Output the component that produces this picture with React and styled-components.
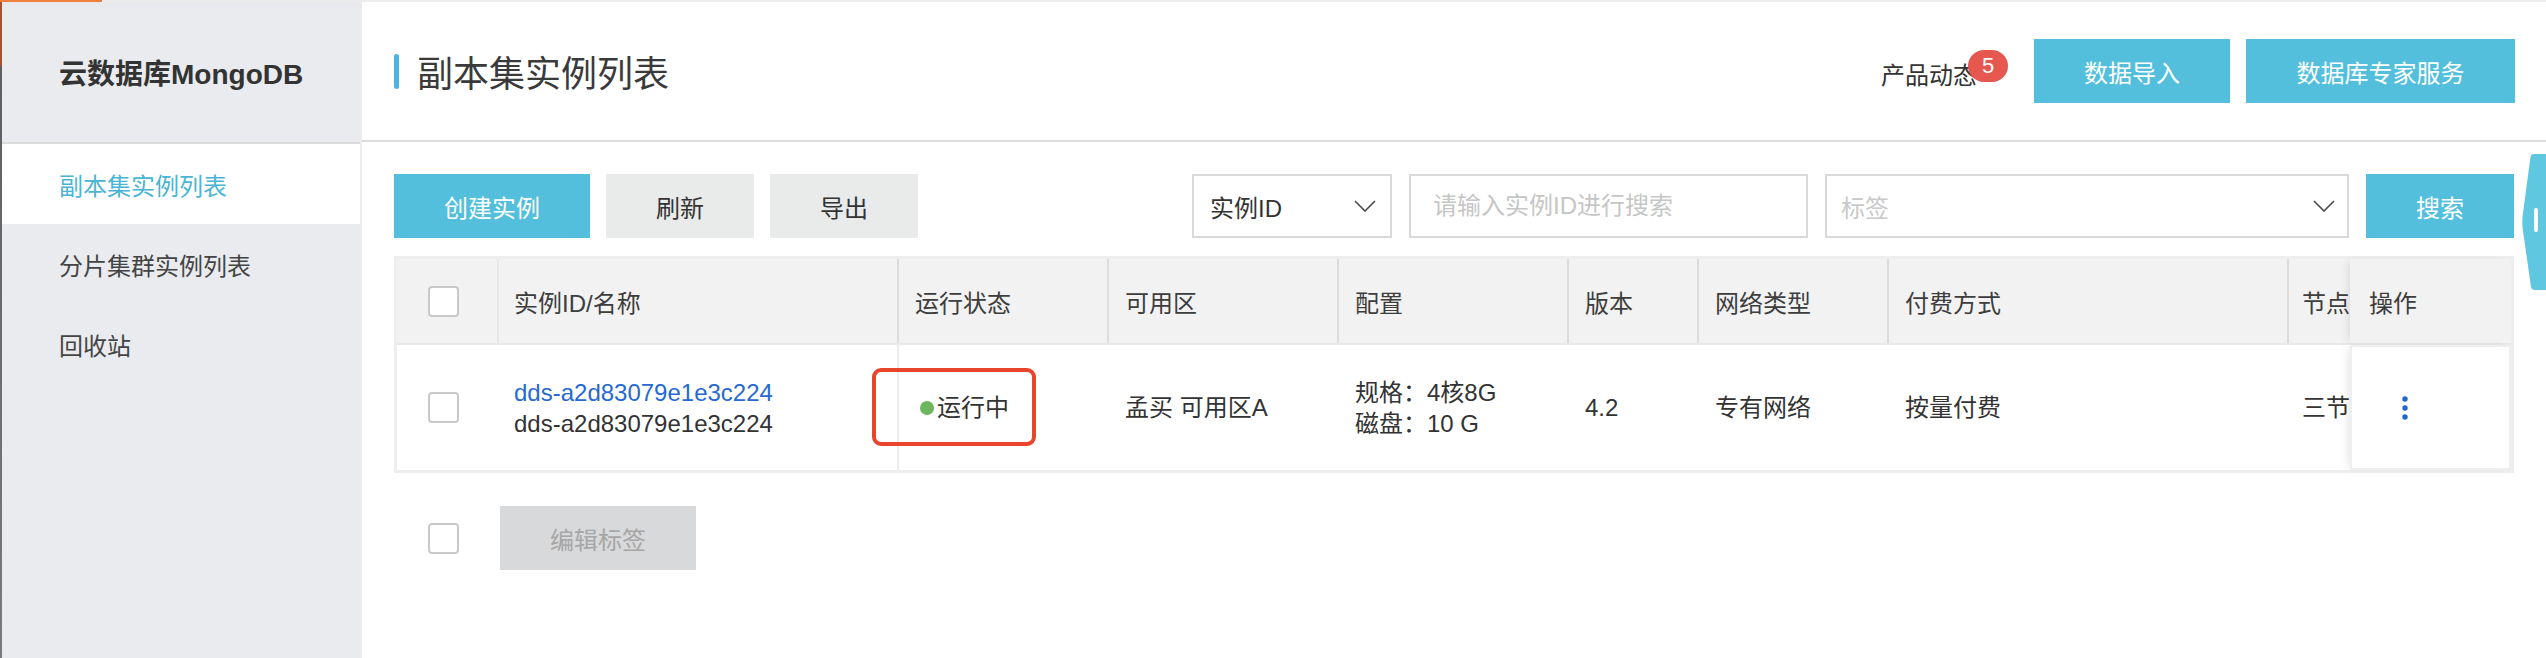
import React from "react";
import styled, { createGlobalStyle } from "styled-components";

const GlobalStyle = createGlobalStyle`
  html, body {
    margin: 0;
    padding: 0;
    background: #fff;
  }
  body {
    font-family: "Liberation Sans", "Noto Sans CJK SC", sans-serif;
    color: #333;
  }
  * {
    box-sizing: border-box;
  }
`;

const Page = styled.div`
  position: relative;
  width: 2546px;
  height: 658px;
  display: flex;
  flex-direction: column;
  overflow: hidden;
`;

const TopStrip = styled.div`
  position: relative;
  z-index: 2;
  height: 2px;
  display: flex;
  background: #ececec;
  box-shadow: 0 2px 8px rgba(0, 0, 0, 0.06);
`;

const TopAccent = styled.div`
  width: 102px;
  background: #ef7f3d;
`;

const Body = styled.div`
  flex: 1;
  display: flex;
`;

const EdgeStrip = styled.div`
  width: 2px;
  background: linear-gradient(#a8532f 0, #a8532f 64px, #5f5f5f 64px, #7a7a7a 100%);
`;

const Sidebar = styled.aside`
  width: 358px;
  background: #eaebef;
  display: flex;
  flex-direction: column;
`;

const SideTitle = styled.div`
  height: 142px;
  display: flex;
  align-items: center;
  padding-left: 57px;
  font-size: 28px;
  font-weight: 700;
  color: #333;
  border-bottom: 2px solid #dcdcdc;
`;

const NavItem = styled.div`
  height: 80px;
  display: flex;
  align-items: center;
  padding-left: 57px;
  font-size: 24px;
  color: ${(p) => (p.$active ? "#49b5d4" : "#444")};
  background: ${(p) => (p.$active ? "#fff" : "transparent")};
`;

const Main = styled.main`
  flex: 1;
  display: flex;
  flex-direction: column;
  border-left: 2px solid #ebebeb;
`;

const Header = styled.header`
  height: 140px;
  display: flex;
  align-items: center;
  justify-content: space-between;
  padding: 0 31px 0 32px;
  border-bottom: 2px solid #dddddd;
`;

const Title = styled.div`
  display: flex;
  align-items: center;
  gap: 18px;
  font-size: 36px;
  color: #3a3a3a;
`;

const TitleBar = styled.span`
  width: 5px;
  height: 35px;
  border-radius: 3px;
  background: #4cb3e6;
`;

const HeaderRight = styled.div`
  display: flex;
  align-items: center;
  gap: 16px;
`;

const News = styled.span`
  position: relative;
  margin: 10px 41px 0 0;
  font-size: 24px;
  line-height: 32px;
  color: #333;
`;

const Badge = styled.span`
  position: absolute;
  left: 87px;
  top: -10px;
  width: 40px;
  height: 32px;
  border-radius: 16px;
  background: #e5574f;
  color: #fff;
  font-size: 22px;
  line-height: 32px;
  text-align: center;
`;

const Button = styled.button`
  width: ${(p) => p.$w}px;
  height: 64px;
  border: none;
  padding: 0;
  font-family: inherit;
  font-size: 24px;
  cursor: pointer;
  background: ${(p) =>
    p.$variant === "primary" ? "#53bfdc" : p.$variant === "disabled" ? "#d8d9db" : "#e9eaea"};
  color: ${(p) =>
    p.$variant === "primary" ? "#fff" : p.$variant === "disabled" ? "#a6a6a6" : "#333"};
`;

const Content = styled.section`
  padding: 32px 32px 0 32px;
`;

const Toolbar = styled.div`
  display: flex;
  justify-content: space-between;
  height: 64px;
`;

const ToolGroup = styled.div`
  display: flex;
  gap: ${(p) => p.$gap}px;
`;

const SelectBox = styled.div`
  width: ${(p) => p.$w}px;
  height: 64px;
  display: flex;
  align-items: center;
  justify-content: space-between;
  padding: 0 ${(p) => p.$pr}px 0 ${(p) => p.$pl}px;
  border: 2px solid #d9d9d9;
  font-size: 24px;
  color: ${(p) => (p.$placeholder ? "#c9c9c9" : "#333")};
`;

const SearchInput = styled.input`
  width: 399px;
  height: 64px;
  padding: 0 22px;
  border: 2px solid #d9d9d9;
  outline: none;
  font-family: inherit;
  font-size: 24px;
  color: #333;

  &::placeholder {
    color: #c6c6c6;
  }
`;

const Table = styled.div`
  margin-top: 18px;
  border: 3px solid #edefef;
`;

const columns = "100px 400px 210px 230px 230px 130px 190px 400px 63px 161px";

const HeadRow = styled.div`
  display: grid;
  grid-template-columns: ${columns};
  height: 86px;
  background: #f2f2f2;
  border-bottom: 2px solid #e9e9e9;
`;

const BodyRow = styled.div`
  display: grid;
  grid-template-columns: ${columns};
  height: 125px;
  background: #fff;
`;

const HeadCell = styled.div`
  display: flex;
  align-items: center;
  padding-left: ${(p) => p.$pl ?? 16}px;
  border-left: ${(p) => (p.$line ? `2px solid ${p.$line}` : "none")};
  font-size: 24px;
  color: #3d3d3d;
  white-space: nowrap;
  overflow: hidden;
`;

const Cell = styled.div`
  position: relative;
  display: flex;
  flex-direction: column;
  justify-content: center;
  padding-left: ${(p) => p.$pl ?? 18}px;
  border-left: ${(p) => (p.$line ? `2px solid ${p.$line}` : "none")};
  font-size: 24px;
  line-height: 31px;
  color: #333;
  white-space: nowrap;
`;

const OpHead = styled(HeadCell)`
  position: relative;
  z-index: 1;
  padding-left: 19px;
  box-shadow: -5px 0 8px -3px rgba(0, 0, 0, 0.1);
`;

const OpCell = styled.div`
  position: relative;
  z-index: 1;
  display: flex;
  align-items: center;
  padding-left: 50px;
  border: 2px solid #efefef;
  box-shadow: -5px 0 8px -3px rgba(0, 0, 0, 0.1);
`;

const Checkbox = styled.span`
  display: inline-block;
  width: 31px;
  height: 31px;
  border: 2px solid #c9c9c9;
  border-radius: 4px;
  background: #fff;
`;

const Link = styled.span`
  color: #2669d0;
`;

const Status = styled.span`
  display: flex;
  align-items: center;
  gap: 3px;
`;

const Dot = styled.span`
  width: 14px;
  height: 14px;
  border-radius: 50%;
  background: #6db55f;
`;

const Annotation = styled.span`
  position: absolute;
  left: -27px;
  top: 23px;
  width: 164px;
  height: 78px;
  border: 4px solid #e8452c;
  border-radius: 9px;
`;

const Footer = styled.div`
  display: flex;
  align-items: center;
  gap: 41px;
  margin-top: 33px;
  padding-left: 34px;
`;

const SideTab = styled.svg`
  position: absolute;
  right: 0;
  top: 154px;
`;

const Chevron = () => (
  <svg width="22" height="12" viewBox="0 0 22 12">
    <polyline points="1,1 11,11 21,1" fill="none" stroke="#4a4a4a" strokeWidth="1.6" />
  </svg>
);

const MoreDots = () => (
  <svg width="6" height="24" viewBox="0 0 6 24">
    <circle cx="3" cy="3" r="2.7" fill="#1f68d2" />
    <circle cx="3" cy="12" r="2.7" fill="#1f68d2" />
    <circle cx="3" cy="21" r="2.7" fill="#1f68d2" />
  </svg>
);

const heads = ["运行状态", "可用区", "配置", "版本", "网络类型", "付费方式"];

export default function App() {
  return (
    <Page>
      <GlobalStyle />
      <TopStrip>
        <TopAccent />
      </TopStrip>
      <Body>
        <EdgeStrip />
        <Sidebar>
          <SideTitle>云数据库MongoDB</SideTitle>
          <NavItem $active>副本集实例列表</NavItem>
          <NavItem>分片集群实例列表</NavItem>
          <NavItem>回收站</NavItem>
        </Sidebar>
        <Main>
          <Header>
            <Title>
              <TitleBar />
              副本集实例列表
            </Title>
            <HeaderRight>
              <News>
                产品动态
                <Badge>5</Badge>
              </News>
              <Button $variant="primary" $w={196}>数据导入</Button>
              <Button $variant="primary" $w={269}>数据库专家服务</Button>
            </HeaderRight>
          </Header>
          <Content>
            <Toolbar>
              <ToolGroup $gap={16}>
                <Button $variant="primary" $w={196}>创建实例</Button>
                <Button $w={148}>刷新</Button>
                <Button $w={148}>导出</Button>
              </ToolGroup>
              <ToolGroup $gap={17}>
                <SelectBox $w={200} $pl={16} $pr={14}>
                  实例ID
                  <Chevron />
                </SelectBox>
                <SearchInput placeholder="请输入实例ID进行搜索" />
                <SelectBox $w={524} $pl={14} $pr={12} $placeholder>
                  标签
                  <Chevron />
                </SelectBox>
                <Button $variant="primary" $w={148}>搜索</Button>
              </ToolGroup>
            </Toolbar>
            <Table>
              <HeadRow>
                <HeadCell $pl={31}>
                  <Checkbox />
                </HeadCell>
                <HeadCell $line="#e9e9e9" $pl={15}>实例ID/名称</HeadCell>
                {heads.map((label) => (
                  <HeadCell key={label} $line="#dcdcdc">
                    {label}
                  </HeadCell>
                ))}
                <HeadCell $line="#dcdcdc" $pl={13}>节点</HeadCell>
                <OpHead>操作</OpHead>
              </HeadRow>
              <BodyRow>
                <Cell $pl={31}>
                  <Checkbox />
                </Cell>
                <Cell $pl={17}>
                  <Link>dds-a2d83079e1e3c224</Link>
                  <span>dds-a2d83079e1e3c224</span>
                </Cell>
                <Cell $line="#ececec" $pl={21}>
                  <Status>
                    <Dot />
                    运行中
                  </Status>
                  <Annotation />
                </Cell>
                <Cell>孟买 可用区A</Cell>
                <Cell>
                  <span>规格：4核8G</span>
                  <span>磁盘：10 G</span>
                </Cell>
                <Cell>4.2</Cell>
                <Cell>专有网络</Cell>
                <Cell>按量付费</Cell>
                <Cell $pl={15}>三节</Cell>
                <OpCell>
                  <MoreDots />
                </OpCell>
              </BodyRow>
            </Table>
            <Footer>
              <Checkbox />
              <Button $variant="disabled" $w={196}>编辑标签</Button>
            </Footer>
          </Content>
        </Main>
      </Body>
      <SideTab width="24" height="136" viewBox="0 0 24 136">
        <path
          d="M24 0 L12 0 Q9 0 8.5 3 L0.6 62 Q0 68 0.6 74 L9 133 Q9.5 136 13 136 L24 136 Z"
          fill="#60c7e1"
        />
        <rect x="12" y="54" width="4" height="24" rx="2" fill="#fff" />
      </SideTab>
    </Page>
  );
}
